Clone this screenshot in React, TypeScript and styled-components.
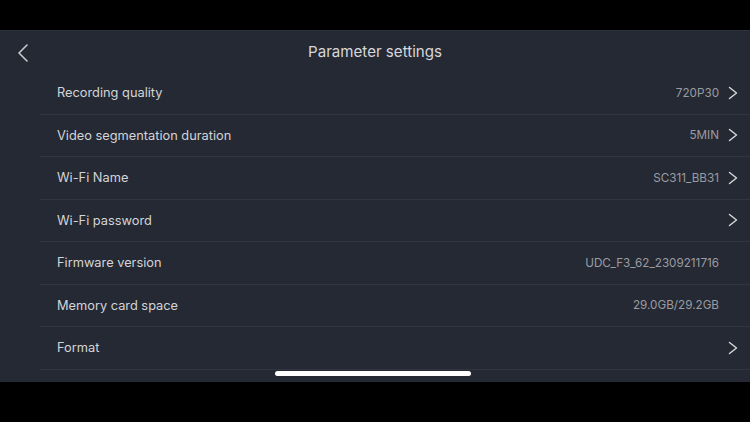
import styled, { createGlobalStyle } from "styled-components";

const GlobalStyle = createGlobalStyle`
  html, body {
    margin: 0;
    padding: 0;
    background: #000;
  }
  * {
    box-sizing: border-box;
  }
`;

const Screen = styled.div`
  width: 750px;
  height: 422px;
  display: flex;
  flex-direction: column;
  background: #000;
  font-family: Inter, "Liberation Sans", sans-serif;
  position: relative;
  overflow: hidden;
`;

const BlackBar = styled.div<{ $h: number }>`
  height: ${(p) => p.$h}px;
  flex-shrink: 0;
  background: #000;
`;

const Panel = styled.div`
  flex: 1;
  background: #252934;
  border-top: 1px solid #2e323c;
  display: flex;
  flex-direction: column;
  overflow: hidden;
`;

const Header = styled.header`
  height: 41px;
  flex-shrink: 0;
  display: flex;
  align-items: center;
  justify-content: center;
  position: relative;
`;

const BackButton = styled.button`
  position: absolute;
  left: 14px;
  top: 12px;
  width: 18px;
  height: 20px;
  padding: 0;
  border: none;
  background: none;
  display: flex;
  align-items: center;
  justify-content: center;
`;

const Title = styled.h1`
  margin: 0;
  font-size: 15.1px;
  font-weight: 400;
  color: #d6d7da;
`;

const List = styled.ul`
  list-style: none;
  margin: 0 0 0 40px;
  padding: 0;
`;

const Row = styled.li`
  height: 42.5px;
  display: flex;
  align-items: center;
  padding: 0 12px 0 17px;
  border-bottom: 1px solid #31353f;
`;

const Label = styled.span`
  flex: 1;
  font-size: 12.8px;
  color: #d3d4d7;
`;

const Value = styled.span`
  font-size: 11.7px;
  color: #9a9ca2;
`;

const ChevronSlot = styled.span`
  width: 10px;
  height: 14px;
  margin-left: 9px;
  display: flex;
  align-items: center;
  justify-content: center;
`;

const HomeIndicator = styled.div`
  position: absolute;
  left: 275px;
  top: 371px;
  width: 196px;
  height: 5px;
  border-radius: 3px;
  background: #fff;
`;

function ChevronRight() {
  return (
    <svg width="10" height="14" viewBox="0 0 10 14">
      <path
        d="M1.5 1.5 L8.5 7 L1.5 12.5"
        fill="none"
        stroke="#d4d5d8"
        strokeWidth="1.5"
        strokeLinecap="round"
        strokeLinejoin="round"
      />
    </svg>
  );
}

function ChevronLeft() {
  return (
    <svg width="12" height="18" viewBox="0 0 12 18">
      <path
        d="M10 1 L2 9 L10 17"
        fill="none"
        stroke="#c9cacd"
        strokeWidth="1.6"
        strokeLinecap="round"
        strokeLinejoin="round"
      />
    </svg>
  );
}

const settings = [
  { label: "Recording quality", value: "720P30", link: true },
  { label: "Video segmentation duration", value: "5MIN", link: true },
  { label: "Wi-Fi Name", value: "SC311_BB31", link: true },
  { label: "Wi-Fi password", value: "", link: true },
  { label: "Firmware version", value: "UDC_F3_62_2309211716", link: false },
  { label: "Memory card space", value: "29.0GB/29.2GB", link: false },
  { label: "Format", value: "", link: true },
];

export default function App() {
  return (
    <>
      <GlobalStyle />
      <Screen>
        <BlackBar $h={30} />
        <Panel>
          <Header>
            <BackButton>
              <ChevronLeft />
            </BackButton>
            <Title>Parameter settings</Title>
          </Header>
          <List>
            {settings.map((s) => (
              <Row key={s.label}>
                <Label>{s.label}</Label>
                {s.value && <Value>{s.value}</Value>}
                <ChevronSlot>{s.link && <ChevronRight />}</ChevronSlot>
              </Row>
            ))}
          </List>
        </Panel>
        <BlackBar $h={40} />
        <HomeIndicator />
      </Screen>
    </>
  );
}
